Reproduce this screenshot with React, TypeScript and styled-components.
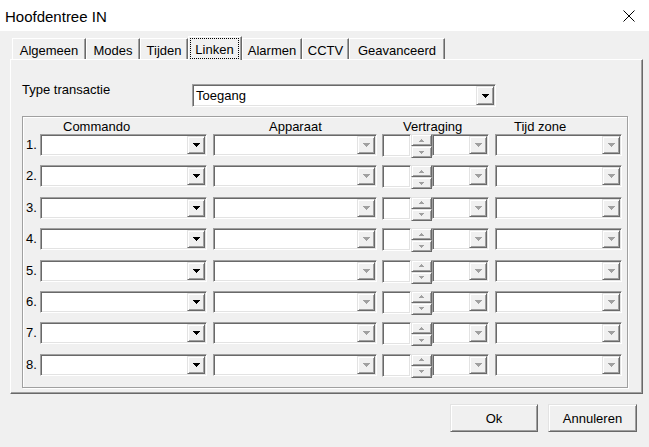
import React from 'react';
import styled, { createGlobalStyle } from 'styled-components';

const Global = createGlobalStyle`
  html, body { margin: 0; padding: 0; background: #f0f0f0; overflow: hidden; }
  body { font-family: "Liberation Sans", Arial, sans-serif; font-size: 13px; color: #000; }
  #root { width: 649px; height: 447px; }
`;

const Window = styled.div`
  width: 649px;
  height: 447px;
  display: flex;
  flex-direction: column;
  background: #f0f0f0;
`;

const TitleBar = styled.div`
  height: 31px;
  flex: none;
  background: #fff;
  display: flex;
  align-items: center;
  justify-content: space-between;
  padding: 0 14px 0 5px;
  box-sizing: border-box;
`;

const Title = styled.span`
  font-size: 15px;
  line-height: 17px;
  padding-top: 1px;
`;

const Body = styled.div`
  flex: 1;
  display: flex;
  flex-direction: column;
  padding: 5px 6px 0 10px;
`;

const TabStrip = styled.div`
  display: flex;
  align-items: flex-end;
  height: 23px;
  padding-left: 2px;
`;

const Tab = styled.div<{ $w: number; $active?: boolean }>`
  width: ${p => p.$w}px;
  height: ${p => (p.$active ? 24 : 21)}px;
  margin-bottom: ${p => (p.$active ? -1 : 0)}px;
  position: relative;
  z-index: ${p => (p.$active ? 1 : 0)};
  box-sizing: border-box;
  background: #f0f0f0;
  border-top: 1px solid #fff;
  border-left: 1px solid #fff;
  border-right: 1px solid #696969;
  box-shadow: inset -1px 0 0 #a0a0a0;
  display: flex;
  padding: ${p => (p.$active ? '1px 2px 1px 1px' : '0')};
`;

const TabLabel = styled.span<{ $focus?: boolean }>`
  flex: 1;
  text-align: center;
  line-height: 15px;
  padding-top: ${p => (p.$focus ? 3 : 4)}px;
  border: ${p => (p.$focus ? '1px dotted #000' : 'none')};
  box-sizing: border-box;
  white-space: nowrap;
`;

const Panel = styled.div`
  height: 335px;
  box-sizing: border-box;
  border-top: 1px solid #fff;
  border-left: 1px solid #fff;
  border-right: 1px solid #696969;
  border-bottom: 1px solid #696969;
  box-shadow: inset -1px -1px 0 #a0a0a0;
  padding: 24px 0 0 11px;
  display: flex;
  flex-direction: column;
`;

const TypeRow = styled.div`
  display: flex;
  align-items: flex-start;
  height: 23px;
`;

const FieldLabel = styled.span`
  width: 170px;
  line-height: 15px;
  margin-top: -2px;
`;

const Sunken = styled.div<{ $w: number; $h?: number }>`
  width: ${p => p.$w}px;
  height: ${p => p.$h ?? 22}px;
  margin-left: ${p => 0}px;
  flex: none;
  box-sizing: border-box;
  background: #fff;
  border: 1px solid;
  border-color: #a0a0a0 #fff #fff #a0a0a0;
  box-shadow: inset 1px 1px 0 #696969, inset -1px -1px 0 #e3e3e3;
  padding: 1px;
  display: flex;
  align-items: stretch;
`;

const ComboText = styled.span`
  flex: 1;
  padding-left: 2px;
  display: flex;
  align-items: center;
  line-height: 15px;
`;

const Raised = styled.div`
  box-sizing: border-box;
  background: #f0f0f0;
  border: 1px solid;
  border-color: #e3e3e3 #696969 #696969 #e3e3e3;
  box-shadow: inset 1px 1px 0 #fff, inset -1px -1px 0 #a0a0a0;
  display: flex;
  align-items: center;
  justify-content: center;
`;

const DropButton = styled(Raised)`
  width: 18px;
  flex: none;
`;

const Group = styled.div`
  margin-top: 9px;
  width: 606px;
  height: 272px;
  box-sizing: border-box;
  border: 1px solid #a0a0a0;
  box-shadow: 1px 1px 0 #fff, inset 1px 1px 0 #fff;
  padding-top: 2px;
  display: flex;
  flex-direction: column;
`;

const HeaderRow = styled.div`
  display: flex;
  height: 15px;
  padding-left: 17px;
`;

const HeaderCell = styled.span<{ $w: number; $ml: number; $pl: number }>`
  width: ${p => p.$w}px;
  margin-left: ${p => p.$ml}px;
  padding-left: ${p => p.$pl}px;
  box-sizing: border-box;
  line-height: 15px;
  white-space: nowrap;
`;

const Rows = styled.div`
  display: flex;
  flex-direction: column;
  gap: 9.4px;
`;

const Row = styled.div`
  display: flex;
  align-items: flex-start;
  height: 22px;
`;

const RowNum = styled.span`
  width: 17px;
  padding-left: 3px;
  box-sizing: border-box;
  line-height: 22px;
`;

const Cell = styled.div<{ $ml: number }>`
  margin-left: ${p => p.$ml}px;
  display: flex;
  flex: none;
`;

const Spin = styled.div`
  width: 21px;
  height: 24px;
  display: flex;
  flex-direction: column;
  flex: none;
`;

const SpinButton = styled(Raised)`
  flex: 1;
`;

const ButtonRow = styled.div`
  display: flex;
  justify-content: flex-end;
  gap: 10px;
  margin-top: 10px;
  padding-right: 6px;
`;

const PushButton = styled(Raised)<{ $w: number }>`
  width: ${p => p.$w}px;
  height: 28px;
  font-family: "Liberation Sans", Arial, sans-serif;
  font-size: 13px;
  line-height: 15px;
`;

const Arrow = ({ disabled, up, small }: { disabled?: boolean; up?: boolean; small?: boolean }) => {
  const c = disabled ? '#a0a0a0' : '#000';
  const rows = small ? [5, 3, 1] : [7, 5, 3, 1];
  const w = rows[0];
  const h = rows.length;
  return (
    <svg width={w} height={h} viewBox={`0 0 ${w} ${h}`} shapeRendering="crispEdges">
      {rows.map((rw, i) => (
        <rect key={i} x={(w - rw) / 2} y={up ? h - 1 - i : i} width={rw} height={1} fill={c} />
      ))}
    </svg>
  );
};

const Combo = ({ w, h, text, disabled }: { w: number; h?: number; text?: string; disabled?: boolean }) => (
  <Sunken $w={w} $h={h}>
    <ComboText>{text}</ComboText>
    <DropButton>
      <Arrow disabled={disabled} />
    </DropButton>
  </Sunken>
);

const tabs = [
  { label: 'Algemeen', w: 74 },
  { label: 'Modes', w: 54 },
  { label: 'Tijden', w: 48 },
  { label: 'Linken', w: 54, active: true },
  { label: 'Alarmen', w: 60 },
  { label: 'CCTV', w: 47 },
  { label: 'Geavanceerd', w: 96 },
];

const CloseIcon = () => (
  <svg width="12" height="12" viewBox="0 0 12 12">
    <path d="M0.5 0.5 L11.5 11.5 M11.5 0.5 L0.5 11.5" stroke="#000" strokeWidth="1" fill="none" />
  </svg>
);

export default function App() {
  return (
    <Window>
      <Global />
      <TitleBar>
        <Title>Hoofdentree IN</Title>
        <CloseIcon />
      </TitleBar>
      <Body>
        <TabStrip>
          {tabs.map(t => (
            <Tab key={t.label} $w={t.w} $active={t.active}>
              <TabLabel $focus={t.active}>{t.label}</TabLabel>
            </Tab>
          ))}
        </TabStrip>
        <Panel>
          <TypeRow>
            <FieldLabel>Type transactie</FieldLabel>
            <Combo w={304} h={23} text="Toegang" />
          </TypeRow>
          <Group>
            <HeaderRow>
              <HeaderCell $w={167} $ml={0} $pl={23}>Commando</HeaderCell>
              <HeaderCell $w={164} $ml={6} $pl={56}>Apparaat</HeaderCell>
              <HeaderCell $w={107} $ml={5} $pl={21}>Vertraging</HeaderCell>
              <HeaderCell $w={127} $ml={6} $pl={19}>Tijd zone</HeaderCell>
            </HeaderRow>
            <Rows>
              {[1, 2, 3, 4, 5, 6, 7, 8].map(n => (
                <Row key={n}>
                  <RowNum>{n}.</RowNum>
                  <Cell $ml={0}>
                    <Combo w={167} />
                  </Cell>
                  <Cell $ml={6}>
                    <Combo w={164} disabled />
                  </Cell>
                  <Cell $ml={5}>
                    <Sunken $w={29} $h={23} />
                    <Spin>
                      <SpinButton>
                        <Arrow up small disabled />
                      </SpinButton>
                      <SpinButton>
                        <Arrow small disabled />
                      </SpinButton>
                    </Spin>
                    <Combo w={57} disabled />
                  </Cell>
                  <Cell $ml={6}>
                    <Combo w={127} disabled />
                  </Cell>
                </Row>
              ))}
            </Rows>
          </Group>
        </Panel>
        <ButtonRow>
          <PushButton $w={88}>Ok</PushButton>
          <PushButton $w={89}>Annuleren</PushButton>
        </ButtonRow>
      </Body>
    </Window>
  );
}
